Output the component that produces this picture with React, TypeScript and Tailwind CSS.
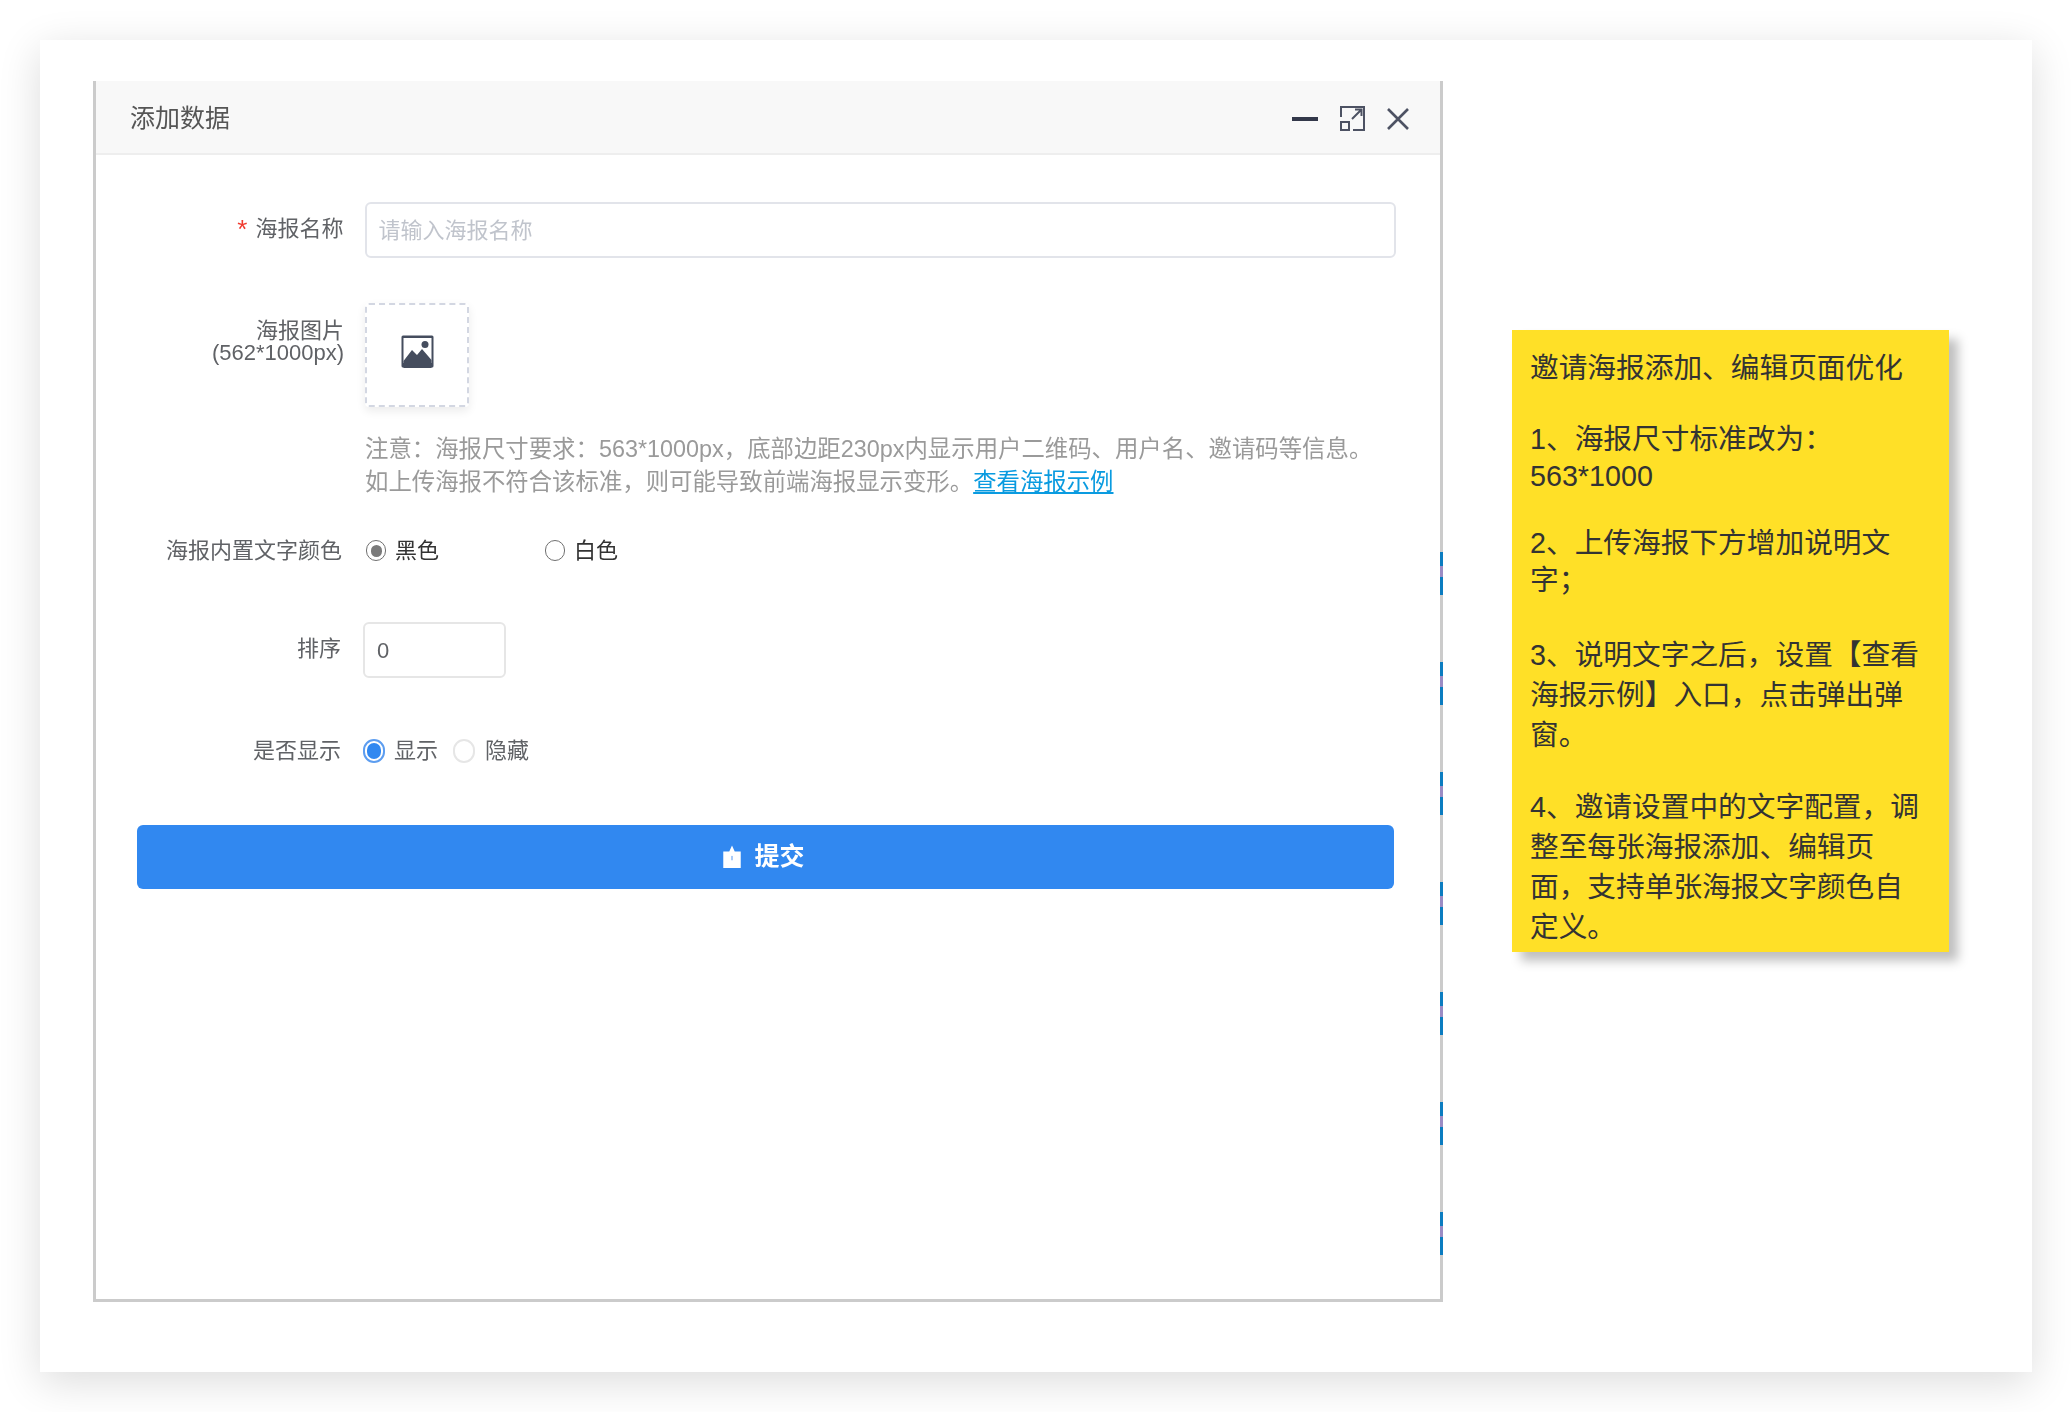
const streaks = [0, 1, 2, 3, 4, 5, 6];

function RadioDot({ checked, tone }: { checked?: boolean; tone: 'gray' | 'blue' | 'light' }) {
  if (tone === 'blue') {
    return (
      <span className="flex h-[24px] w-[22px] items-center justify-center rounded-full border-2 border-[#5c9df0] bg-white">
        <span className="h-[16px] w-[14px] rounded-full bg-[#3188f0]" />
      </span>
    );
  }
  if (tone === 'light') {
    return <span className="h-[24px] w-[22px] rounded-full border-2 border-[#e6e6e6] bg-white" />;
  }
  return (
    <span className="flex h-[21px] w-[20px] items-center justify-center rounded-full border-[1.5px] border-[#707070] bg-white">
      {checked && <span className="h-[12px] w-[11px] rounded-full bg-[#7a7a7a]" />}
    </span>
  );
}

function FieldLabel({ children, width }: { children: React.ReactNode; width: string }) {
  return <div className={`${width} text-right text-[22px] leading-[24px] text-[#606266]`}>{children}</div>;
}

function ImageIcon() {
  return (
    <svg width="33" height="33" viewBox="0 0 33 33">
      <rect x="0.5" y="0.5" width="32" height="32" rx="1.5" fill="#454d5e" />
      <rect x="2.5" y="3" width="28" height="25" fill="#fff" />
      <circle cx="24" cy="9.5" r="3.5" fill="#454d5e" />
      <path d="M2.5 26 L11 15 L16 20 L21 14 L30.5 25 V33 H2.5 Z" fill="#454d5e" />
    </svg>
  );
}

function SubmitIcon() {
  return (
    <svg width="20" height="24" viewBox="0 0 18 22">
      <path d="M1 6 L6.5 6 L9 0.5 L11.5 6 L17 6 V21 H1 Z" fill="#fff" />
      <rect x="8.2" y="10" width="1.6" height="4" fill="#9cc4f7" />
    </svg>
  );
}

export default function App() {
  return (
    <div className="min-h-[1412px] bg-white p-[40px] font-['Liberation_Sans','Noto_Sans_CJK_SC',sans-serif]">
      <div className="flex h-[1332px] w-[1992px] items-start bg-white pl-[53px] pt-[41px] shadow-[0_10px_40px_rgba(0,0,0,0.14)]">
        {/* modal */}
        <div className="relative h-[1221px] w-[1350px] shrink-0 border-x-[3px] border-b-[3px] border-[#cbcbcb] bg-white blur-[0.6px]">
          <div className="flex h-[74px] items-center justify-between border-b-2 border-[#eeeeee] bg-[#f8f8f8] pl-[34px] pr-[31px] pt-[3px]">
            <div className="text-[25px] text-[#555555]">添加数据</div>
            <div className="flex items-center gap-[22px]">
              <div className="h-[4px] w-[26px] bg-[#33384a]" />
              <svg width="25" height="25" viewBox="0 0 25 25" fill="none" stroke="#4d5263" strokeWidth="2">
                <path d="M1 11 V1 H24 V24 H13" />
                <rect x="1" y="16" width="8" height="8" />
                <path d="M12 13 L21 4 M15 3.5 H21.5 V10" />
              </svg>
              <svg width="22" height="22" viewBox="0 0 22 22" fill="none" stroke="#4d5263" strokeWidth="2.6">
                <path d="M1 1 L21 21 M21 1 L1 21" />
              </svg>
            </div>
          </div>

          <div className="pl-[41px] pr-[44px]">
            {/* poster name */}
            <div className="mt-[47px] flex">
              <div className="flex h-[56px] w-[207px] items-center justify-end pb-[3px] text-[22px] text-[#606266]">
                <span className="mr-[8px] text-[26px] leading-[22px] text-[#f03a2e]">*</span>海报名称
              </div>
              <div className="ml-[21px] flex h-[56px] w-[1034px] items-center rounded-[6px] border-2 border-[#e2e4ea] pl-[12px] text-[22px] text-[#c0c4cc]">
                请输入海报名称
              </div>
            </div>

            {/* poster image */}
            <div className="mt-[45px] flex">
              <div className="w-[207px] pt-[17px] text-right text-[22px] leading-[22px] text-[#606266]">
                海报图片
                <br />
                (562*1000px)
              </div>
              <div className="ml-[21px] flex h-[104px] w-[104px] items-center justify-center rounded-[4px] border-2 border-dashed border-[#d3d7e2] pb-[8px] shadow-[0_4px_10px_rgba(0,0,0,0.08)]">
                <ImageIcon />
              </div>
            </div>

            {/* note */}
            <div className="ml-[228px] mt-[26px] text-[23.4px] leading-[33px] text-[#9a9a9a]">
              注意&#xFF1A;海报尺寸要求&#xFF1A;563*1000px&#xFF0C;底部边距230px内显示用户二维码、用户名、邀请码等信息。
              <br />
              如上传海报不符合该标准&#xFF0C;则可能导致前端海报显示变形。
              <span className="text-[#0a9be0] underline">查看海报示例</span>
            </div>

            {/* text colour */}
            <div className="mt-[35px] flex items-center">
              <FieldLabel width="w-[205px]">海报内置文字颜色</FieldLabel>
              <div className="ml-[24px] flex items-center text-[22px] text-[#333333]">
                <RadioDot checked tone="gray" />
                <span className="ml-[9px] w-[150px]">黑色</span>
                <RadioDot tone="gray" />
                <span className="ml-[9px]">白色</span>
              </div>
            </div>

            {/* sort */}
            <div className="mt-[55px] flex">
              <div className="w-[204px] pt-[15px]">
                <FieldLabel width="w-full">排序</FieldLabel>
              </div>
              <div className="ml-[22px] flex h-[56px] w-[143px] items-center rounded-[6px] border-2 border-[#e6e6e6] pl-[12px] text-[22px] text-[#606266]">
                0
              </div>
            </div>

            {/* visibility */}
            <div className="mt-[56px] flex items-center">
              <FieldLabel width="w-[204px]">是否显示</FieldLabel>
              <div className="ml-[22px] flex items-center text-[22px] text-[#606266]">
                <RadioDot checked tone="blue" />
                <span className="ml-[9px] w-[59px]">显示</span>
                <RadioDot tone="light" />
                <span className="ml-[10px]">隐藏</span>
              </div>
            </div>

            <div className="mt-[58px] flex h-[64px] w-[1257px] items-center justify-center gap-[12px] rounded-[6px] bg-[#3188f0] pr-[4px] text-[25px] font-bold text-white">
              <SubmitIcon />
              提交
            </div>
          </div>

          {/* rendering streaks along the right edge */}
          <div className="absolute right-[-3px] top-[471px] flex w-[3px] flex-col gap-[67px]">
            {streaks.map((n) => (
              <div key={n} className="flex h-[43px] flex-col">
                <div className="h-[14px] bg-[#0b7cc0]" />
                <div className="h-[11px] bg-[#9b8cc4]" />
                <div className="h-[18px] bg-[#0b7cc0]" />
              </div>
            ))}
          </div>
        </div>

        {/* yellow note */}
        <div className="ml-[69px] mt-[249px] h-[622px] w-[437px] shrink-0 bg-[#ffe027] pl-[18px] pt-[18px] text-[28.7px] text-[#333333] shadow-[9px_9px_10px_rgba(0,0,0,0.25)]">
          <p className="mb-[33px] leading-[40px]">邀请海报添加、编辑页面优化</p>
          <p className="mb-[30px] leading-[37px]">
            1、海报尺寸标准改为&#xFF1A;
            <br />
            563*1000
          </p>
          <p className="mb-[36px] leading-[37px]">
            2、上传海报下方增加说明文
            <br />
            字&#xFF1B;
          </p>
          <p className="mb-[32px] leading-[40px]">
            3、说明文字之后&#xFF0C;设置【查看
            <br />
            海报示例】入口&#xFF0C;点击弹出弹
            <br />
            窗。
          </p>
          <p className="leading-[40px]">
            4、邀请设置中的文字配置&#xFF0C;调
            <br />
            整至每张海报添加、编辑页
            <br />
            面&#xFF0C;支持单张海报文字颜色自
            <br />
            定义。
          </p>
        </div>
      </div>
    </div>
  );
}
